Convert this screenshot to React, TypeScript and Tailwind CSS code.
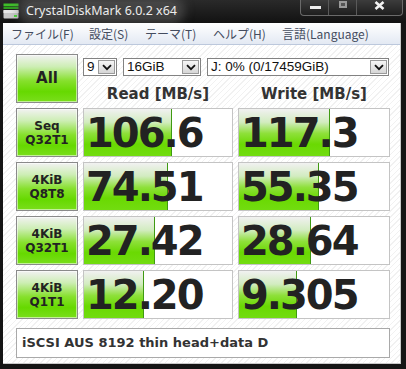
import React from "react";

const ROWS = [
  { l1: "Seq", l2: "Q32T1", read: "106.6", readBar: 89, write: "117.3", writeBar: 92 },
  { l1: "4KiB", l2: "Q8T8", read: "74.51", readBar: 85, write: "55.35", writeBar: 81 },
  { l1: "4KiB", l2: "Q32T1", read: "27.42", readBar: 72, write: "28.64", writeBar: 73 },
  { l1: "4KiB", l2: "Q1T1", read: "12.20", readBar: 61, write: "9.305", writeBar: 59 },
];

const MENU = [
  { label: "ファイル(F)", w: "w-[78px]" },
  { label: "設定(S)", w: "w-[56px]" },
  { label: "テーマ(T)", w: "w-[68px]" },
  { label: "ヘルプ(H)", w: "w-[69px]" },
  { label: "言語(Language)", w: "w-[100px]" },
];

const greenButton =
  "border border-[#8a8a8a] shadow-[inset_0_0_0_1px_rgba(255,255,255,0.55)] bg-[linear-gradient(to_bottom,#f2f2f2_0%,#cdeeb4_25%,#86e02c_55%,#66d900_78%,#7ade1c_100%)]";

function DiskIcon() {
  return (
    <svg width="16" height="16" viewBox="0 0 16 16">
      <rect x="0.5" y="0.5" width="15" height="2.5" fill="#3fbf2a" />
      <rect x="0.5" y="3.5" width="15" height="2.5" fill="#2e9e1e" />
      <rect x="0.5" y="7" width="15" height="8.5" rx="1" fill="#c9c9c9" />
      <rect x="0.5" y="7" width="15" height="3" fill="#e8e8e8" />
      <rect x="11" y="12" width="3" height="2" fill="#4cd93a" />
    </svg>
  );
}

function TitleBar() {
  return (
    <div className="h-[23px] flex items-start bg-[linear-gradient(to_bottom,#2a2a2a,#121212)]">
      <div className="ml-[3px] mt-[3px]">
        <DiskIcon />
      </div>
      <span className="ml-[5px] mt-[2px] px-[2px] rounded-full bg-[rgba(95,95,95,0.55)] shadow-[0_0_10px_6px_rgba(95,95,95,0.55)] text-[12.5px] leading-[17px] text-[#ececec] font-['Noto_Sans',sans-serif]">
        CrystalDiskMark 6.0.2 x64
      </span>
      <div className="ml-auto mr-[3px] flex h-[16px] border border-t-0 border-[#6a6a6a] rounded-b-[4px] overflow-hidden bg-[linear-gradient(to_bottom,#3c3c3c,#1e1e1e)]">
        <div className="w-[28px] flex items-start justify-center border-r border-[#5a5a5a]">
          <div className="mt-[6px] ml-[2px] w-[11px] h-[3px] bg-[#eeeeee]" />
        </div>
        <div className="w-[28px] flex items-start justify-center border-r border-[#5a5a5a]">
          <div className="mt-[1px] w-[8px] h-[7px] border-2 border-[#9a9a9a] bg-[#555555]" />
        </div>
        <div className="w-[45px] flex items-start justify-center">
          <svg width="11" height="9" viewBox="0 0 11 9" className="mt-[1px]">
            <path d="M1.5 1 L9.5 8 M9.5 1 L1.5 8" stroke="#f2f2f2" strokeWidth="2.6" />
          </svg>
        </div>
      </div>
    </div>
  );
}

function MenuBar() {
  return (
    <div className="h-[22px] flex items-center pl-[8px] border-b border-[#bcc8dc] bg-[linear-gradient(to_bottom,#ffffff,#e3e9f3)]">
      {MENU.map((m) => (
        <span
          key={m.label}
          className={`${m.w} text-[12px] text-[#444c5e] font-['Noto_Sans_CJK_JP',sans-serif] leading-none`}
        >
          {m.label}
        </span>
      ))}
    </div>
  );
}

function Select({ text, w }: { text: string; w: string }) {
  return (
    <div className={`${w} h-[18px] flex bg-white border border-[#828282]`}>
      <span className="flex-1 pl-[3px] text-[13.5px] leading-[16px] text-[#111111] font-['Liberation_Sans',sans-serif] whitespace-nowrap">
        {text}
      </span>
      <div className="w-[17px] m-[1px] flex items-center justify-center border border-[#9a9a9a] bg-[linear-gradient(to_bottom,#f6f6f6,#d6d6d6)]">
        <svg width="10" height="7" viewBox="0 0 10 7">
          <path d="M1 1.2 L5 5.2 L9 1.2" fill="none" stroke="#111111" strokeWidth="1.8" />
        </svg>
      </div>
    </div>
  );
}

function ResultCell({ value, bar }: { value: string; bar: number }) {
  return (
    <div className="relative h-[49px] bg-white border border-[#c4c4c4] flex items-center overflow-hidden">
      <div
        className="absolute left-0 top-0 bottom-0 border-r border-[#3f9a12] bg-[linear-gradient(to_bottom,#f1f1f1_0%,#d2ecc0_28%,#8ee03a_52%,#6ad902_75%,#72dc10_100%)]"
        style={{ width: bar - 1 }}
      />
      <span className="relative pl-[2px] text-[40px] leading-none font-bold tracking-[-2px] text-[#222222] font-['DejaVu_Sans',sans-serif]">
        {value}
      </span>
    </div>
  );
}

function LabelButton({ l1, l2 }: { l1: string; l2: string }) {
  return (
    <div
      className={`h-[49px] flex flex-col items-center justify-center ${greenButton} text-[12px] leading-[14px] font-bold text-[#222222] font-['DejaVu_Sans',sans-serif]`}
    >
      <span>{l1}</span>
      <span>{l2}</span>
    </div>
  );
}

export default function App() {
  return (
    <div className="w-[406px] h-[369px] flex flex-col overflow-hidden bg-[#151515]">
      <TitleBar />
      <div className="flex-1 ml-[3px] mr-[5px] mb-[5px] flex flex-col bg-white border-r border-b border-[#c9c9c9]">
        <MenuBar />
        <div className="flex-1 pl-[13px] pt-[9px] bg-[repeating-linear-gradient(135deg,#ffffff_0px,#ffffff_3px,#f1f1f1_3px,#f1f1f1_4px)]">
          <div className="grid grid-cols-[62px_150px_152px] gap-x-[5px] gap-y-[5px]">
            <div
              className={`h-[49px] flex items-center justify-center ${greenButton} text-[15px] font-bold text-[#222222] font-['DejaVu_Sans',sans-serif]`}
            >
              All
            </div>
            <div className="col-span-2 h-[49px] flex flex-col pt-[4px]">
              <div className="flex gap-[6px]">
                <Select text="9" w="w-[34px]" />
                <Select text="16GiB" w="w-[78px]" />
                <Select text="J: 0% (0/17459GiB)" w="w-[182px]" />
              </div>
              <div className="grid grid-cols-[150px_152px] gap-x-[5px] mt-[9px]">
                <span className="text-center text-[15px] leading-[18px] font-bold text-[#333333] font-['DejaVu_Sans',sans-serif]">
                  Read [MB/s]
                </span>
                <span className="text-center text-[15px] leading-[18px] font-bold text-[#333333] font-['DejaVu_Sans',sans-serif]">
                  Write [MB/s]
                </span>
              </div>
            </div>
            {ROWS.map((r, i) => (
              <React.Fragment key={i}>
                <LabelButton l1={r.l1} l2={r.l2} />
                <ResultCell value={r.read} bar={r.readBar} />
                <ResultCell value={r.write} bar={r.writeBar} />
              </React.Fragment>
            ))}
          </div>
          <div className="mt-[9px] w-[374px] h-[30px] flex items-center pl-[5px] bg-white border border-[#a9a9a9]">
            <span className="text-[13px] font-bold text-[#333333] font-['DejaVu_Sans',sans-serif]">
              iSCSI AUS 8192 thin head+data D
            </span>
          </div>
        </div>
      </div>
    </div>
  );
}
